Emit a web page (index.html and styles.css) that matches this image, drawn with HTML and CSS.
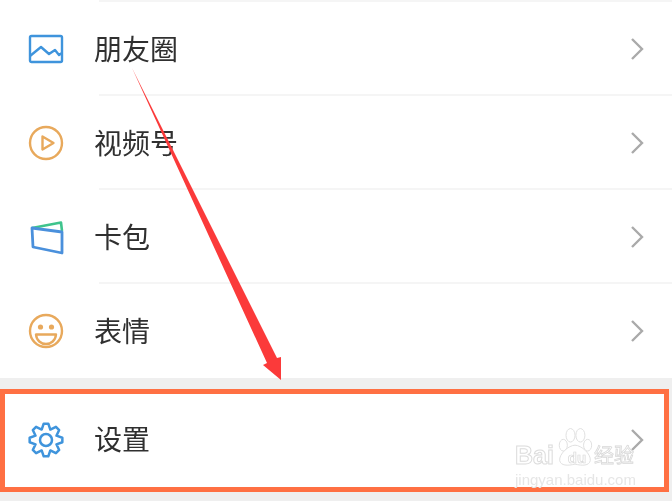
FILE: index.html
```html
<!DOCTYPE html>
<html lang="zh">
<head>
<meta charset="utf-8">
<title>设置</title>
<link rel="stylesheet" href="styles.css">
</head>
<body>
<main class="page">
  <section class="menu">
    <div class="sep"></div>
    <div class="row">
      <svg class="icon" viewBox="0 0 36 36"><rect x="2" y="5" width="32" height="26" rx="1.5" fill="none" stroke="#3f94dc" stroke-width="2.4"/><path d="M2 25 L13 16 L21 23 L27 19 L31 24 L34 22" fill="none" stroke="#3f94dc" stroke-width="2.4" stroke-linejoin="round"/></svg>
      <span class="label">朋友圈</span>
      <svg class="chev" viewBox="0 0 14 24"><path d="M2 2 L12 12 L2 22" /></svg>
    </div>
    <div class="sep"></div>
    <div class="row">
      <svg class="icon" viewBox="0 0 36 36"><circle cx="18" cy="18" r="16" fill="none" stroke="#e8a95c" stroke-width="2.4"/><path d="M14.5 11.5 L25.5 18 L14.5 24.5 Z" fill="none" stroke="#e8a95c" stroke-width="2.4" stroke-linejoin="round"/></svg>
      <span class="label">视频号</span>
      <svg class="chev" viewBox="0 0 14 24"><path d="M2 2 L12 12 L2 22" /></svg>
    </div>
    <div class="sep"></div>
    <div class="row">
      <svg class="icon" viewBox="0 0 36 36"><path d="M4 9 L33 3.5 L34 12" fill="none" stroke="#3fc48d" stroke-width="2.6" stroke-linejoin="round"/><path d="M4 9 L34 13 L34 34 L5 28 Z" fill="none" stroke="#4a90dc" stroke-width="2.8" stroke-linejoin="round"/></svg>
      <span class="label">卡包</span>
      <svg class="chev" viewBox="0 0 14 24"><path d="M2 2 L12 12 L2 22" /></svg>
    </div>
    <div class="sep"></div>
    <div class="row row-last">
      <svg class="icon" viewBox="0 0 36 36"><circle cx="18" cy="18" r="16" fill="none" stroke="#e8a95c" stroke-width="2.4"/><circle cx="12.5" cy="14" r="2.6" fill="#e8a95c"/><circle cx="23.5" cy="14" r="2.6" fill="#e8a95c"/><path d="M8 21.5 H28 C27.5 27.5 23 31 18 31 C13 31 8.5 27.5 8 21.5 Z" fill="none" stroke="#e8a95c" stroke-width="2.4" stroke-linejoin="round"/></svg>
      <span class="label">表情</span>
      <svg class="chev" viewBox="0 0 14 24"><path d="M2 2 L12 12 L2 22" /></svg>
    </div>
  </section>
  <section class="highlight">
    <div class="row row-setting">
      <svg class="icon" viewBox="0 0 36 36"><g transform="translate(18 18)" fill="none" stroke="#3f94dc" stroke-width="2.5" stroke-linejoin="round"><path d="M-2.3 -16.34 L2.3 -16.34 L4.32 -10.44 L9.93 -13.18 L13.18 -9.93 L10.44 -4.32 L16.34 -2.3 L16.34 2.3 L10.44 4.32 L13.18 9.93 L9.93 13.18 L4.32 10.44 L2.3 16.34 L-2.3 16.34 L-4.32 10.44 L-9.93 13.18 L-13.18 9.93 L-10.44 4.32 L-16.34 2.3 L-16.34 -2.3 L-10.44 -4.32 L-13.18 -9.93 L-9.93 -13.18 L-4.32 -10.44 Z"/><circle r="6"/></g></svg>
      <span class="label">设置</span>
      <svg class="chev" viewBox="0 0 14 24"><path d="M2 2 L12 12 L2 22" /></svg>
    </div>
  </section>
</main>
<svg class="arrow" viewBox="0 0 672 501"><polygon points="132,68 277,358 281,357 281,380 263,365 267,363" fill="#fb3a3a"/></svg>
<div class="mark">
  <svg class="paw" viewBox="0 0 40 44"><g fill="#fff" stroke="#e0e0e0" stroke-width="1.1"><ellipse cx="7" cy="20" rx="4.5" ry="6.5"/><ellipse cx="15" cy="9" rx="5" ry="7.5"/><ellipse cx="26" cy="9" rx="5" ry="7.5"/><ellipse cx="34" cy="20" rx="4.5" ry="6.5"/><path d="M20 20 C27 20 38 30 37 37 C36 43 28 43 20 41 C12 43 4 43 3 37 C2 30 13 20 20 20 Z"/></g></svg>
  <div class="mark-top">
    <span class="mark-bai">Bai</span>
    <span class="mark-du">du</span>
    <span class="mark-jy">经验</span>
  </div>
  <div class="mark-url">jingyan.baidu.com</div>
</div>
</body>
</html>
```

FILE: styles.css
```css
* {
  box-sizing: border-box;
}

html,
body {
  margin: 0;
  height: 100%;
  overflow: hidden;
}

body {
  position: relative;
  background: #efefef;
  font-family: "Noto Sans CJK SC", "Noto Sans", sans-serif;
}

.page {
  display: flex;
  flex-direction: column;
}

.menu {
  background: #fff;
  margin-bottom: 11px;
}

.sep {
  height: 2px;
  margin-left: 99px;
  background: #f5f5f5;
}

.row {
  display: flex;
  align-items: center;
  height: 92px;
  padding: 2px 28px 0 28px;
}

.row-last {
  height: 94px;
  padding-top: 0;
}

.row-setting {
  height: 91px;
  padding: 0 20px 0 23px;
}

.icon {
  flex: none;
  width: 36px;
  height: 36px;
  filter: blur(0.4px);
}

.label {
  margin: 0 0 3px 30px;
  font-size: 28px;
  line-height: 40px;
  color: #303030;
  filter: blur(0.4px);
}

.chev {
  flex: none;
  width: 14px;
  height: 24px;
  margin-left: auto;
  fill: none;
  stroke: #aaa;
  stroke-width: 2.4;
  filter: blur(0.4px);
}

.highlight {
  width: 669px;
  height: 103px;
  border: 5px solid #ff7043;
  background: #fff;
}

.arrow {
  position: absolute;
  left: 0;
  top: 0;
  width: 672px;
  height: 501px;
  pointer-events: none;
}

.mark {
  position: absolute;
  left: 515px;
  top: 427px;
  width: 122px;
  height: 60px;
  filter: blur(0.3px);
}

.paw {
  position: absolute;
  left: 42px;
  top: 0;
  width: 36px;
  height: 40px;
}

.mark-top {
  position: relative;
  display: flex;
  align-items: center;
  height: 40px;
  padding-top: 16px;
}

.mark-bai {
  width: 45px;
  font-family: "Liberation Sans", sans-serif;
  font-size: 25px;
  font-weight: 700;
  color: #fff;
  -webkit-text-stroke: 1px #dcdcdc;
}

.mark-du {
  width: 34px;
  padding-top: 4px;
  font-family: "Liberation Sans", sans-serif;
  font-size: 15px;
  font-weight: 700;
  text-align: center;
  color: #fff;
  -webkit-text-stroke: 0.7px #d8d8d8;
}

.mark-jy {
  font-size: 20px;
  line-height: 24px;
  color: #fff;
  -webkit-text-stroke: 0.8px #d8d8d8;
}

.mark-url {
  position: relative;
  margin-top: 5px;
  font-family: "Liberation Sans", sans-serif;
  font-size: 15px;
  line-height: 16px;
  color: #e6e6e6;
}
```
